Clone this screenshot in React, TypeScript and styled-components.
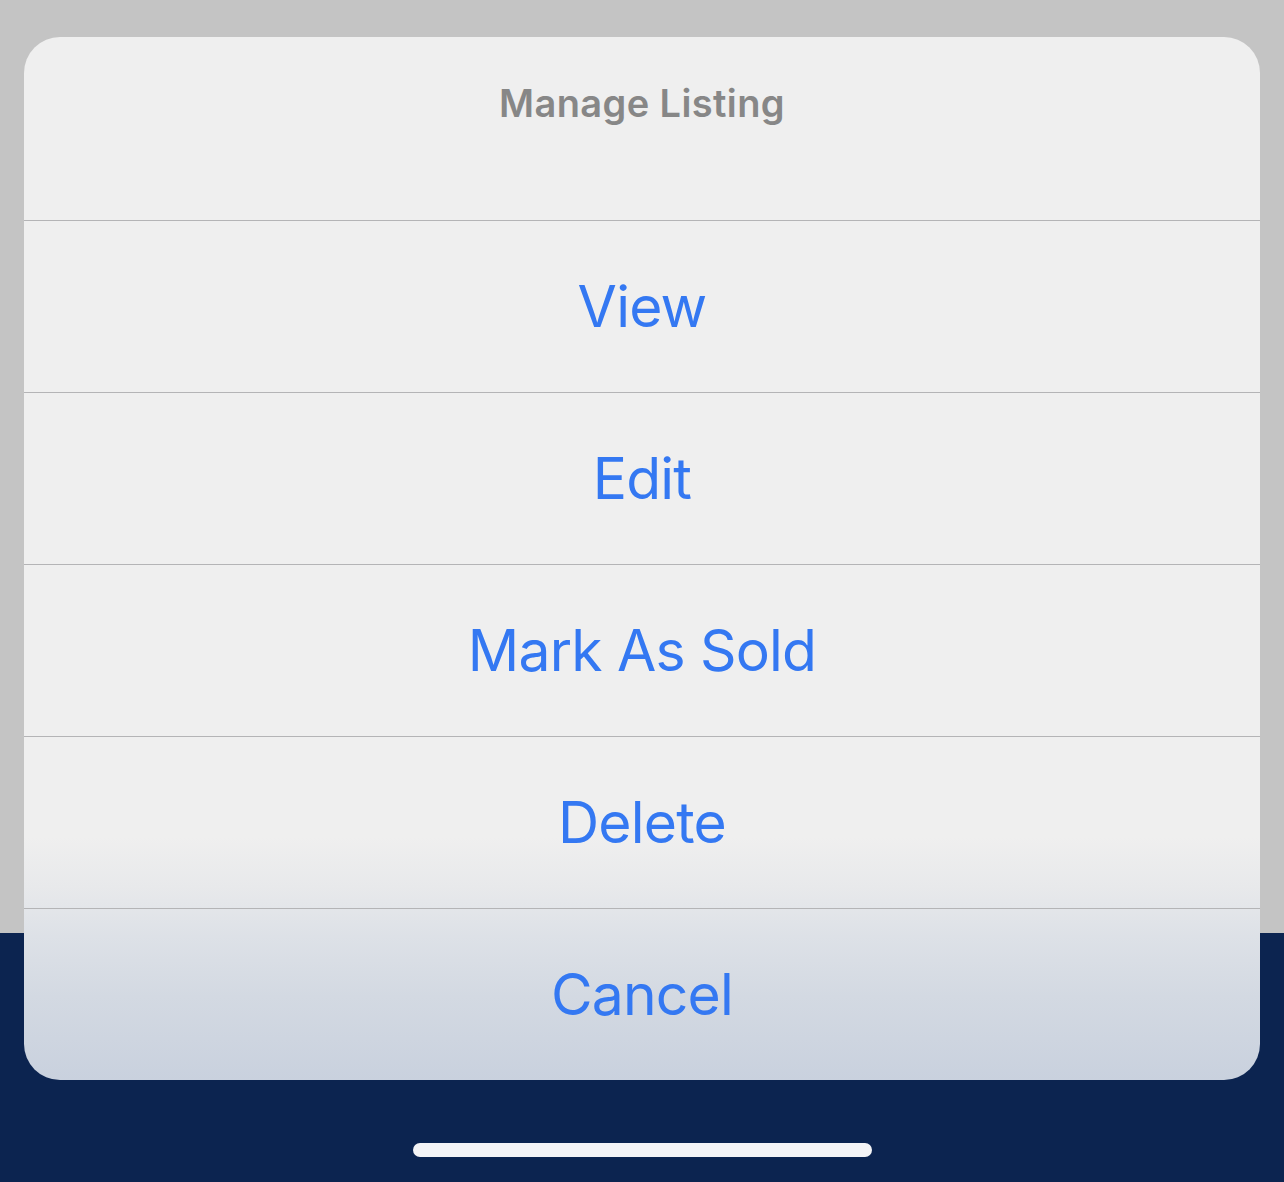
import React from "react";
import styled, { createGlobalStyle } from "styled-components";

const GlobalStyle = createGlobalStyle`
  html, body {
    margin: 0;
    padding: 0;
  }
  body {
    width: 1284px;
    height: 1182px;
    overflow: hidden;
    font-family: Inter, "Noto Sans", sans-serif;
    background: linear-gradient(to bottom, #c4c4c4 0, #c4c4c4 933px, #0c2450 933px, #0c2450 100%);
  }
`;

const Screen = styled.div`
  display: flex;
  flex-direction: column;
  align-items: center;
  padding-top: 37px;
  height: 1182px;
  box-sizing: border-box;
`;

const Sheet = styled.div`
  width: 1236px;
  border-radius: 36px;
  overflow: hidden;
  display: flex;
  flex-direction: column;
  background: linear-gradient(
    to bottom,
    #efefef 0,
    #efefef 800px,
    #e8e9eb 850px,
    #dde1e7 900px,
    #d3d9e2 960px,
    #c9d1de 1043px
  );
`;

const Title = styled.div`
  height: 184px;
  box-sizing: border-box;
  padding-top: 43px;
  text-align: center;
  font-size: 38px;
  font-weight: 600;
  color: #878787;
  letter-spacing: 0.4px;
  border-bottom: 1px solid #b4b4b6;
`;

const Action = styled.button<{ $last?: boolean }>`
  height: ${({ $last }) => ($last ? "171px" : "172px")};
  border: 0;
  border-bottom: ${({ $last }) => ($last ? "0" : "1px solid #b4b4b6")};
  background: transparent;
  font-family: Inter, "Noto Sans", sans-serif;
  font-size: 57px;
  font-weight: 400;
  letter-spacing: -0.8px;
  color: #3478f2;
  display: flex;
  align-items: center;
  justify-content: center;
  padding: 0;
`;

const HomeIndicator = styled.div`
  width: 459px;
  height: 14px;
  border-radius: 7px;
  background: #f4f4f6;
  margin-top: 63px;
`;

const actions = ["View", "Edit", "Mark As Sold", "Delete", "Cancel"];

export default function App() {
  return (
    <>
      <GlobalStyle />
      <Screen>
        <Sheet>
          <Title>Manage Listing</Title>
          {actions.map((a, i) => (
            <Action key={a} $last={i === actions.length - 1}>
              {a}
            </Action>
          ))}
        </Sheet>
        <HomeIndicator />
      </Screen>
    </>
  );
}
